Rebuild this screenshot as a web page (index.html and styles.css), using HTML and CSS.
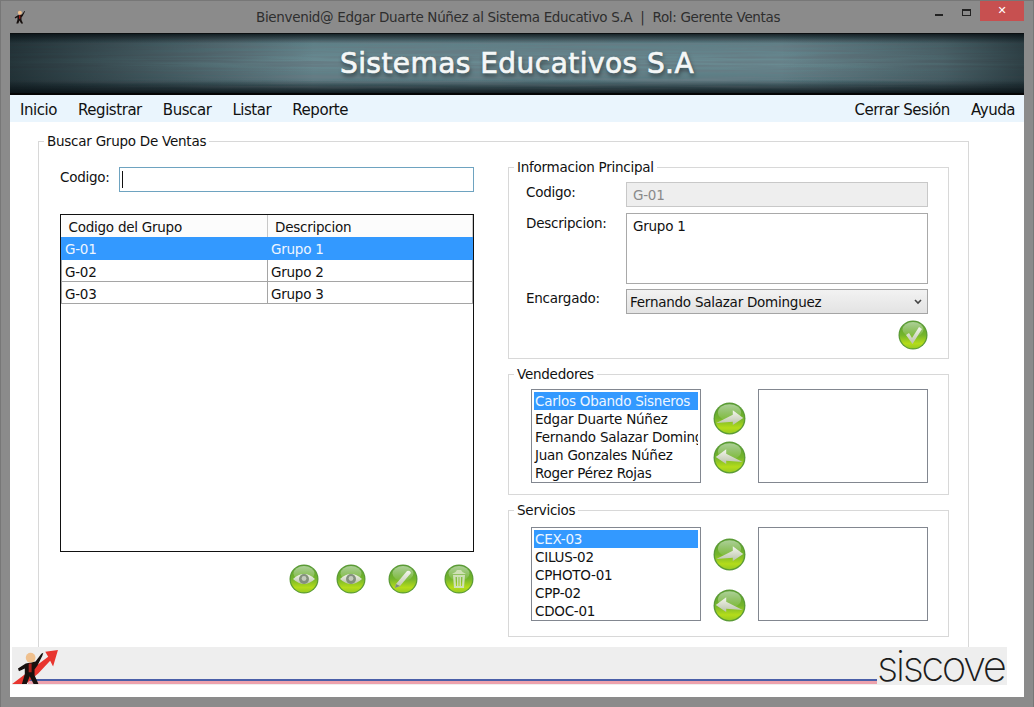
FILE: index.html
```html
<!DOCTYPE html>
<html lang="es">

<head>
    <meta charset="UTF-8">
    <meta name="viewport" content="width=device-width, initial-scale=1.0">
    <title>Sistemas Educativos S.A</title>
    <link rel="stylesheet" href="styles.css">
</head>

<body>
    <svg class="defs" width="0" height="0" aria-hidden="true">
        <defs>
            <linearGradient id="gloss" x1="0" y1="0" x2="0" y2="1">
                <stop offset="0" stop-color="#5aa030" />
                <stop offset="0.5" stop-color="#74b52c" />
                <stop offset="0.82" stop-color="#b4dc1a" />
                <stop offset="1" stop-color="#98cc22" />
            </linearGradient>
            <linearGradient id="shine" x1="0" y1="0" x2="0" y2="1">
                <stop offset="0" stop-color="#fff" stop-opacity="0.5" />
                <stop offset="1" stop-color="#fff" stop-opacity="0.05" />
            </linearGradient>
            <linearGradient id="pale" x1="0" y1="0" x2="0" y2="1">
                <stop offset="0" stop-color="#f4f6ee" />
                <stop offset="1" stop-color="#b9c2a8" />
            </linearGradient>
            <symbol id="orb" viewBox="0 0 30 30">
                <circle cx="15" cy="15" r="14.5" fill="#5a9a36" />
                <circle cx="15" cy="15" r="13.3" fill="url(#gloss)" />
                <ellipse cx="15" cy="9.5" rx="10.5" ry="7.5" fill="url(#shine)" />
            </symbol>
            <symbol id="eye" viewBox="0 0 30 30">
                <use href="#orb" />
                <path d="M4 15 Q15 5 26 15 Q15 25 4 15 Z" fill="url(#pale)" />
                <circle cx="15" cy="15" r="5" fill="#83907c" />
                <circle cx="15" cy="14.5" r="2.4" fill="#c4cbbd" />
            </symbol>
            <symbol id="arrow-right" viewBox="0 0 30 30">
                <use href="#orb" />
                <path d="M3 19 L18 11.5 L18 7.5 L27.5 14.5 L18 21 L18 18 Z" fill="url(#pale)" />
            </symbol>
            <symbol id="arrow-left" viewBox="0 0 30 30">
                <use href="#orb" />
                <path d="M27 19 L12 11.5 L12 7.5 L2.5 14.5 L12 21 L12 18 Z" fill="url(#pale)" />
            </symbol>
            <symbol id="person" viewBox="0 0 30 40">
                <path d="M3 23 L11 18 L21 16 L27 8 L29 7 L28 10 L23 20 L20 24 L20 30 L24 39 L19 39 L15 31 L12 39 L7 39 L10 29 L10 23 L4 26 Z" fill="#17110f" />
                <circle cx="16" cy="12" r="5" fill="#efc08e" />
                <path d="M14 18 L17 18 L17 27 L14 27 Z" fill="#a8201c" />
            </symbol>
        </defs>
    </svg>

    <div class="titlebar">
        <svg class="app-icon" viewBox="0 0 30 40"><use href="#person" /></svg>
        <p class="title-text">Bienvenid@ Edgar Duarte Núñez al Sistema Educativo S.A &nbsp;|&nbsp; Rol: Gerente Ventas</p>
        <div class="win-buttons">
            <span class="win-min"></span>
            <span class="win-max"></span>
            <span class="win-close">✕</span>
        </div>
    </div>

    <div class="client">
        <header class="banner">
            <h1>Sistemas Educativos S.A</h1>
        </header>

        <nav class="menu">
            <ul>
                <li>Inicio</li>
                <li>Registrar</li>
                <li>Buscar</li>
                <li>Listar</li>
                <li>Reporte</li>
            </ul>
            <ul>
                <li>Cerrar Sesión</li>
                <li>Ayuda</li>
            </ul>
        </nav>

        <main class="main">
            <fieldset class="outer">
                <legend>Buscar Grupo De Ventas</legend>
                <div class="columns">
                    <section class="left">
                        <div class="search-row">
                            <label>Codigo:</label>
                            <div class="search-box"><span class="caret"></span></div>
                        </div>

                        <div class="grid-box">
                            <table>
                                <thead>
                                    <tr>
                                        <th class="col-code">Codigo del Grupo</th>
                                        <th>Descripcion</th>
                                    </tr>
                                </thead>
                                <tbody>
                                    <tr class="selected">
                                        <td>G-01</td>
                                        <td>Grupo 1</td>
                                    </tr>
                                    <tr>
                                        <td>G-02</td>
                                        <td>Grupo 2</td>
                                    </tr>
                                    <tr>
                                        <td>G-03</td>
                                        <td>Grupo 3</td>
                                    </tr>
                                </tbody>
                            </table>
                        </div>

                        <div class="actions">
                            <svg class="orb" viewBox="0 0 30 30"><use href="#eye" /></svg>
                            <svg class="orb orb-2" viewBox="0 0 30 30"><use href="#eye" /></svg>
                            <svg class="orb orb-3" viewBox="0 0 30 30">
                                <use href="#orb" />
                                <path d="M8 20 L19 7 Q22 6 23 9 L12 22 L7 24 Z" fill="url(#pale)" />
                                <path d="M8 20 L12 22 L7 24 Z" fill="#7f8c76" />
                            </svg>
                            <svg class="orb orb-4" viewBox="0 0 30 30">
                                <use href="#orb" />
                                <path d="M8 10 L11.5 8 L13 6 L17 6 L18.5 8 L22 10 Z" fill="#cfe0b6" />
                                <path d="M9 11 L21 11 L20 24 L10 24 Z M11.5 13 L12 22 L13 22 L13 13 Z M14.5 13 L14.5 22 L15.5 22 L15.5 13 Z M17 13 L17 22 L18 22 L18.5 13 Z" fill="#cfe0b6" fill-rule="evenodd" />
                            </svg>
                        </div>
                    </section>

                    <section class="right">
                        <fieldset class="box box-info">
                            <legend>Informacion Principal</legend>
                            <div class="form-grid">
                                <label>Codigo:</label>
                                <input class="field" type="text" value="G-01" disabled>
                                <label>Descripcion:</label>
                                <textarea class="field" readonly>Grupo 1</textarea>
                                <label class="label-encargado">Encargado:</label>
                                <select class="field">
                                    <option>Fernando Salazar Dominguez</option>
                                </select>
                            </div>
                            <div class="save-row">
                                <svg class="orb" viewBox="0 0 30 30">
                                    <use href="#orb" />
                                    <path d="M8 15 L11 13 L14 18 L21 7 L24 9 L14.5 24 Z" fill="url(#pale)" />
                                </svg>
                            </div>
                        </fieldset>

                        <fieldset class="box box-list">
                            <legend>Vendedores</legend>
                            <div class="transfer">
                                <ul class="listbox">
                                    <li class="selected">Carlos Obando Sisneros</li>
                                    <li>Edgar Duarte Núñez</li>
                                    <li>Fernando Salazar Dominguez</li>
                                    <li>Juan Gonzales Núñez</li>
                                    <li>Roger Pérez Rojas</li>
                                </ul>
                                <div class="arrows">
                                    <svg class="orb orb-big" viewBox="0 0 30 30"><use href="#arrow-right" /></svg>
                                    <svg class="orb orb-big" viewBox="0 0 30 30"><use href="#arrow-left" /></svg>
                                </div>
                                <ul class="listbox"></ul>
                            </div>
                        </fieldset>

                        <fieldset class="box box-list box-services">
                            <legend>Servicios</legend>
                            <div class="transfer">
                                <ul class="listbox">
                                    <li class="selected">CEX-03</li>
                                    <li>CILUS-02</li>
                                    <li>CPHOTO-01</li>
                                    <li>CPP-02</li>
                                    <li>CDOC-01</li>
                                </ul>
                                <div class="arrows">
                                    <svg class="orb orb-big" viewBox="0 0 30 30"><use href="#arrow-right" /></svg>
                                    <svg class="orb orb-big" viewBox="0 0 30 30"><use href="#arrow-left" /></svg>
                                </div>
                                <ul class="listbox"></ul>
                            </div>
                        </fieldset>
                    </section>
                </div>
            </fieldset>
        </main>

        <footer class="footer">
            <svg class="footer-icon" viewBox="0 0 50 40">
                <path d="M0 39 L25 20 L37 11 L34 6 L47 4 L42 21 L39 15 L27 28 L14 39 Z" fill="#e8352f" />
                <use href="#person" x="3" y="0" width="30" height="40" />
            </svg>
            <div class="stripe"></div>
            <span class="brand">siscove</span>
        </footer>
    </div>
</body>

</html>
```

FILE: styles.css
```css
* {
    box-sizing: border-box;
}

html,
body {
    margin: 0;
    padding: 0;
}

body {
    width: 1034px;
    height: 707px;
    overflow: hidden;
    background-color: #8b8b8b;
    border: 1px solid #777;
    border-bottom: none;
    font-family: "DejaVu Sans", sans-serif;
    font-size: 13.5px;
    letter-spacing: -0.25px;
    color: #111;
}

.defs {
    display: block;
    width: 0;
    height: 0;
}

/* barra de titulo */
.titlebar {
    height: 32px;
    display: flex;
    align-items: flex-start;
    padding-left: 11px;
}

.app-icon {
    margin-top: 7px;
    width: 15px;
    height: 16px;
}

.title-text {
    margin: 8px 0 0 229px;
    width: 660px;
    color: #2e2e2e;
    font-size: 13.5px;
    letter-spacing: -0.33px;
    white-space: nowrap;
}

.win-buttons {
    margin-left: auto;
    margin-right: 9px;
    display: flex;
    align-items: flex-start;
}

.win-min {
    width: 8px;
    height: 2px;
    margin: 13px 19px 0 0;
    background-color: #222;
}

.win-max {
    width: 9px;
    height: 7px;
    margin: 8px 9px 0 0;
    border: 1px solid #222;
    border-top-width: 2px;
}

.win-close {
    width: 44px;
    height: 20px;
    background-color: #c75050;
    color: white;
    font-size: 11px;
    line-height: 20px;
    text-align: center;
}

.client {
    width: 1014px;
    height: 664px;
    margin-left: 9px;
    background-color: white;
}

/* banner */
.banner {
    height: 62px;
    border-top: 1px solid #0a0e10;
    border-bottom: 2px solid #050505;
    background:
        linear-gradient(180deg, rgba(6, 14, 18, 0.8) 0, rgba(6, 14, 18, 0) 16%, rgba(6, 14, 18, 0) 78%, rgba(6, 14, 18, 0.85) 100%),
        linear-gradient(90deg, rgba(8, 18, 22, 0.7) 0, rgba(8, 18, 22, 0.35) 15%, rgba(8, 18, 22, 0) 30%, rgba(8, 18, 22, 0) 76%, rgba(8, 18, 22, 0.3) 92%, rgba(8, 18, 22, 0.6) 100%),
        url("data:image/svg+xml,%3Csvg xmlns='http://www.w3.org/2000/svg' width='1014' height='62'%3E%3Cfilter id='n'%3E%3CfeTurbulence type='fractalNoise' baseFrequency='0.008 0.4' numOctaves='4' seed='11'/%3E%3CfeColorMatrix values='0 0 0 0 0.13 0 0 0 0 0.2 0 0 0 0 0.23 2.4 0 0 0 -0.75'/%3E%3C/filter%3E%3Crect width='1014' height='62' filter='url(%23n)'/%3E%3C/svg%3E"),
        linear-gradient(180deg, #587a82, #6a8b92 50%, #4a6a72);
    display: flex;
    align-items: center;
    justify-content: center;
}

.banner h1 {
    margin: 0;
    color: #f4f7f7;
    font-family: "DejaVu Sans", sans-serif;
    font-size: 28px;
    font-weight: normal;
    letter-spacing: 0.45px;
    -webkit-text-stroke: 0.7px #f4f7f7;
    text-shadow: 1px 3px 4px rgba(0, 0, 0, 0.55);
}

/* menu */
.menu {
    height: 27px;
    background-color: #eaf5fd;
    display: flex;
    justify-content: space-between;
    font-size: 15px;
    letter-spacing: -0.45px;
    line-height: 30px;
    padding: 0 9px 0 10px;
}

.menu ul {
    list-style-type: none;
    margin: 0;
    padding: 0;
    display: flex;
    gap: 21px;
}

/* contenido */
.main {
    height: 525px;
    overflow: hidden;
    padding: 10px 0 0 28px;
}

fieldset {
    margin: 0;
    min-width: 0;
    border: 1px solid #d8d8d8;
}

legend {
    padding: 0 3px;
    line-height: 18px;
}

.outer {
    width: 931px;
    height: 560px;
    padding: 0 0 0 21px;
}

.outer > legend {
    margin-left: -16px;
}

.columns {
    display: grid;
    grid-template-columns: 414px 441px;
    column-gap: 34px;
}

.search-row {
    display: flex;
    align-items: flex-start;
    margin-top: 17px;
}

.search-row label {
    width: 59px;
    line-height: 20px;
}

.search-box {
    width: 355px;
    height: 25px;
    border: 1px solid #6ea3c0;
    padding: 3px 2px;
}

.caret {
    display: block;
    width: 1px;
    height: 17px;
    background-color: #111;
}

.grid-box {
    margin-top: 22px;
    height: 338px;
    border: 1px solid #111;
}

table {
    width: 100%;
    border-collapse: collapse;
    table-layout: fixed;
}

th {
    height: 22px;
    padding: 1px 0 0 7px;
    font-weight: normal;
    text-align: left;
    background-color: #fcfcfc;
    border-right: 1px solid #c8c8c8;
}

.col-code {
    width: 206px;
}

td {
    height: 22px;
    padding: 3px 0 0 3px;
    border: 1px solid #a5a5a5;
    border-top: none;
}

tr.selected td {
    background-color: #3399ff;
    color: #eef6ff;
    border-color: #3399ff;
}

.actions {
    display: flex;
    justify-content: flex-end;
    margin-top: 12px;
    padding-left: 229px;
}

.orb {
    display: block;
    width: 30px;
    height: 30px;
}

.orb-2 {
    margin-left: 17px;
}

.orb-3 {
    margin-left: 22px;
}

.orb-4 {
    margin-left: 26px;
}

.orb-big {
    width: 33px;
    height: 33px;
}

.right {
    padding-top: 8px;
}

.box {
    padding: 0 20px 0 17px;
    margin-bottom: 6px;
}

.box-info {
    height: 201px;
}

.box-info > legend {
    margin-left: -12px;
}

.form-grid {
    display: grid;
    grid-template-columns: 100px 302px;
    grid-template-rows: 25px 71px 25px;
    row-gap: 6px;
    margin-top: 6px;
}

.form-grid label {
    padding-top: 1px;
    line-height: 18px;
}

.form-grid .label-encargado {
    margin-top: -2px;
}

.field {
    width: 100%;
    height: 100%;
    margin: 0;
    border: 1px solid #a9a9a9;
    border-radius: 0;
    font-family: "DejaVu Sans", sans-serif;
    font-size: 13.5px;
    letter-spacing: -0.25px;
    color: #111;
    background-color: white;
    padding: 3px 6px;
    resize: none;
}

input.field {
    background-color: #eeeeee;
    color: #8a8a8a;
    border-color: #c8c8c8;
}

textarea.field {
    padding-top: 4px;
}

select.field {
    appearance: none;
    margin-top: -1px;
    padding: 0 3px;
    border-color: #a5a5a5;
    background:
        url("data:image/svg+xml,%3Csvg xmlns='http://www.w3.org/2000/svg' width='8' height='6'%3E%3Cpath d='M1 1 L4 4 L7 1' fill='none' stroke='%23444' stroke-width='1.6'/%3E%3C/svg%3E") no-repeat right 5px center,
        linear-gradient(180deg, #f2f2f2, #e3e3e3);
}

.save-row {
    display: flex;
    justify-content: flex-end;
    margin-top: 5px;
}

.box-list {
    height: 130px;
    padding: 0 20px 0 22px;
}

.box-list > legend {
    margin-left: -17px;
}

.box-services {
    height: 136px;
    margin-bottom: 0;
}

.transfer {
    display: flex;
    margin-top: 6px;
}

.box-services .transfer {
    margin-top: 8px;
}

.listbox {
    list-style-type: none;
    width: 170px;
    height: 94px;
    margin: 0;
    padding: 2px;
    border: 1px solid #828790;
    overflow: hidden;
    white-space: nowrap;
}

.listbox li {
    height: 18px;
    line-height: 18px;
    padding-left: 1px;
    overflow: hidden;
}

.listbox li.selected {
    background-color: #3399ff;
    color: #eef6ff;
}

.arrows {
    width: 57px;
    display: flex;
    flex-direction: column;
    align-items: center;
    gap: 6px;
    padding-top: 13px;
}

.box-services .arrows {
    gap: 18px;
    padding-top: 11px;
}

/* pie */
.footer {
    width: 995px;
    height: 38px;
    margin-left: 2px;
    background-color: #eeeeee;
    display: flex;
    align-items: flex-end;
}

.footer-icon {
    width: 49px;
    height: 39px;
    flex-shrink: 0;
    margin-right: -33px;
    position: relative;
    z-index: 1;
}

.stripe {
    flex: 1;
    height: 5px;
    margin-bottom: 1px;
    border-top: 2px solid #4a5fa8;
    background-color: #eda2ad;
}

.brand {
    width: 130px;
    font-family: "Inter", sans-serif;
    font-weight: 200;
    font-size: 42px;
    line-height: 38px;
    letter-spacing: -2.5px;
    color: #1c1c1c;
    text-align: left;
}
```
